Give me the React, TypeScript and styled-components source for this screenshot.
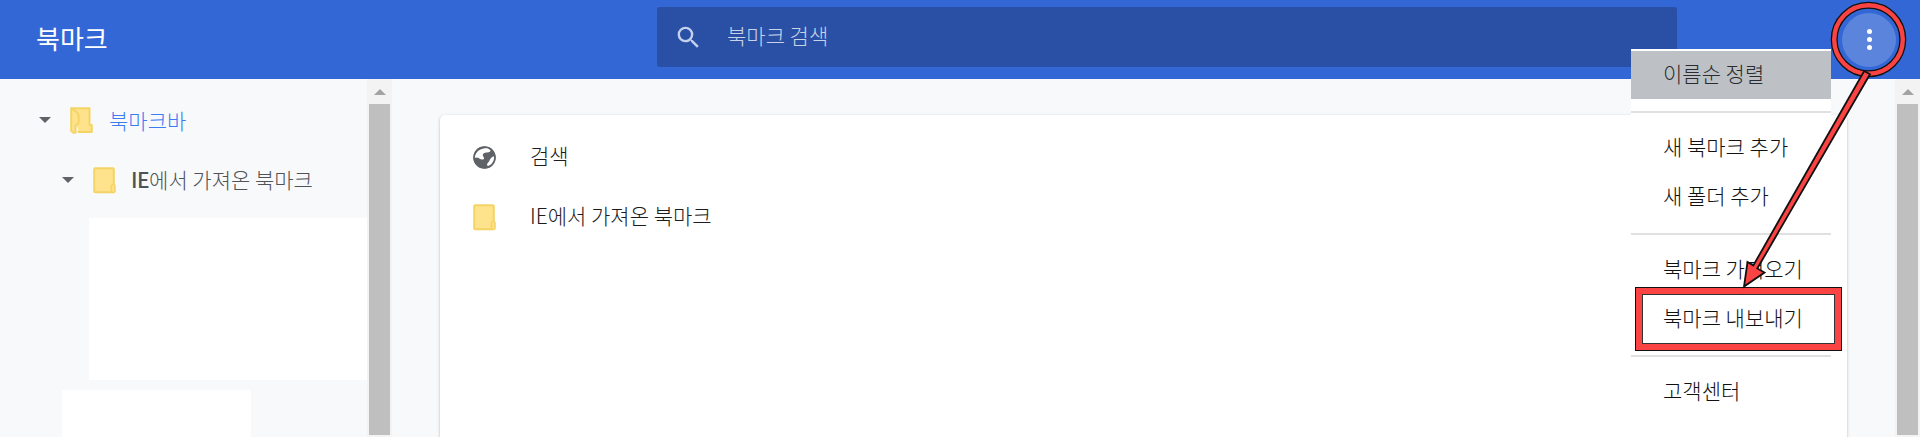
import styled, { createGlobalStyle } from 'styled-components';

const GlobalStyle = createGlobalStyle`
  html, body {
    margin: 0;
    padding: 0;
    background: #f8f9fa;
  }
  body {
    font-family: 'Noto Sans CJK KR', 'Noto Sans', sans-serif;
    font-weight: 300;
    overflow: hidden;
  }
`;

const Page = styled.div`
  position: relative;
  width: 1920px;
  height: 437px;
  overflow: hidden;
  display: flex;
  flex-direction: column;
`;

const Header = styled.header`
  flex: 0 0 79px;
  background: #3367d6;
  display: flex;
  align-items: center;
`;

const Title = styled.h1`
  flex: 0 0 657px;
  margin: 0;
  padding-left: 36px;
  padding-bottom: 5px;
  box-sizing: border-box;
  color: #fff;
  font-size: 26px;
  font-weight: 400;
`;

const SearchBox = styled.div`
  width: 1020px;
  height: 60px;
  margin-bottom: 5px;
  padding-left: 17px;
  box-sizing: border-box;
  border-radius: 3px;
  background: #2a50a6;
  display: flex;
  align-items: center;
  gap: 24px;
  color: rgba(255, 255, 255, 0.75);
  font-size: 21px;
  svg {
    flex: none;
  }
`;

const Label = styled.span<{ $lift?: number }>`
  padding-bottom: ${(p) => p.$lift ?? 5}px;
`;

const MoreButton = styled.button`
  margin-left: 165px;
  width: 54px;
  height: 54px;
  border: 0;
  border-radius: 50%;
  background: #5b84dd;
  display: flex;
  flex-direction: column;
  align-items: center;
  justify-content: center;
  gap: 3px;
`;

const Dot = styled.span`
  width: 5px;
  height: 5px;
  border-radius: 50%;
  background: #fff;
`;

const Body = styled.div`
  flex: 1;
  min-height: 0;
  display: flex;
`;

const Sidebar = styled.aside`
  flex: 0 0 367px;
  padding-top: 11px;
  box-sizing: border-box;
  overflow: hidden;
`;

const TreeRow = styled.div<{ $depth: number; $active?: boolean }>`
  height: 60px;
  display: flex;
  align-items: center;
  padding-left: ${(p) => 39 + p.$depth * 23}px;
  color: ${(p) => (p.$active ? '#3b7cf2' : '#4f5357')};
  font-size: 21px;
  b {
    font-weight: 500;
    margin-left: -1px;
    letter-spacing: -0.5px;
  }
`;

const Caret = styled.span`
  width: 0;
  height: 0;
  border-left: 6px solid transparent;
  border-right: 6px solid transparent;
  border-top: 6px solid #5f6368;
  margin-right: 19px;
`;

const FolderSlot = styled.span`
  width: 23px;
  height: 27px;
  margin-right: 16px;
  display: flex;
  svg {
    display: block;
  }
`;

const RedactedBlock = styled.div<{ $left: number; $width: number; $height: number; $top: number }>`
  background: #fff;
  margin-left: ${(p) => p.$left}px;
  margin-top: ${(p) => p.$top}px;
  width: ${(p) => p.$width}px;
  height: ${(p) => p.$height}px;
`;

const Scrollbar = styled.div`
  flex: 0 0 25px;
  background: #f3f3f3;
  display: flex;
  flex-direction: column;
  align-items: center;
`;

const ScrollArrow = styled.div`
  flex: 0 0 25px;
  display: flex;
  align-items: center;
  justify-content: center;
  &::before {
    content: '';
    border-left: 6px solid transparent;
    border-right: 6px solid transparent;
    border-bottom: 6px solid #a3a3a3;
  }
`;

const ScrollThumb = styled.div`
  width: 21px;
  height: 331px;
  background: #bfbfbf;
`;

const Main = styled.main`
  flex: 1;
  min-width: 0;
  padding: 36px 48px 0;
  box-sizing: border-box;
  overflow: hidden;
`;

const Card = styled.section`
  width: 1407px;
  height: 400px;
  padding-top: 12px;
  box-sizing: border-box;
  background: #fff;
  border-radius: 5px;
  box-shadow: 0 1px 3px rgba(60, 64, 67, 0.35);
`;

const CardRow = styled.div`
  height: 60px;
  padding-left: 33px;
  display: flex;
  align-items: center;
  color: #1c1c1c;
  font-size: 21px;
`;

const RowIcon = styled.span`
  width: 23px;
  height: 27px;
  margin-right: 34px;
  display: flex;
  align-items: center;
`;

const Menu = styled.div`
  position: absolute;
  left: 1631px;
  top: 49px;
  width: 200px;
  padding-top: 2px;
  background: #fff;
`;

const MenuItem = styled.div<{ $hover?: boolean }>`
  height: ${(p) => (p.$hover ? 48 : 49)}px;
  padding-left: 32px;
  padding-bottom: 4px;
  box-sizing: border-box;
  display: flex;
  align-items: center;
  background: ${(p) => (p.$hover ? '#bdc1c6' : 'transparent')};
  color: ${(p) => (p.$hover ? '#2a2c2e' : '#111')};
  font-size: 21px;
`;

const MenuSection = styled.div<{ $last?: boolean }>`
  padding: 10px 0 ${(p) => (p.$last ? 21 : 12)}px;
  border-top: 2px solid #e0e0e0;
`;

const MenuGap = styled.div`
  height: 12px;
`;

const ExportHighlight = styled.div`
  position: absolute;
  left: 1636px;
  top: 288px;
  width: 205px;
  height: 62px;
  box-sizing: border-box;
  border: 6px solid #fb4343;
  outline: 1px solid #111;
  box-shadow: inset 0 0 0 1px #333;
`;

const Annotation = styled.svg`
  position: absolute;
  left: 0;
  top: 0;
  pointer-events: none;
`;

const SearchIcon = () => (
  <svg width="29" height="29" viewBox="0 0 24 24" fill="#c3d0ee">
    <path d="M15.5 14h-.79l-.28-.27A6.471 6.471 0 0 0 16 9.5 6.5 6.5 0 1 0 9.5 16c1.61 0 3.09-.59 4.23-1.57l.27.28v.79l5 4.99L20.49 19l-4.99-5zm-6 0C7.01 14 5 11.99 5 9.5S7.01 5 9.5 5 14 7.01 14 9.5 11.99 14 9.5 14z" />
  </svg>
);

const GlobeIcon = () => (
  <svg width="23" height="23" viewBox="0 0 23 23">
    <circle cx="11.5" cy="11.5" r="11" fill="#5f6368" />
    <path
      d="M15 2c2 1 3.4 2.6 1.8 3.8-1.8 1.3-5.6.2-6.8 2.4-1 1.9 1.6 2.8 1 4.6-.5 1.4-3 .6-4.6-.4C5.2 11.400 3 11 1.600 12c.2-4.800 4-8.800 8.800-9.600C12 2 13.600 1.700 15 2z"
      fill="#fff"
    />
    <path
      d="M21.200 10.500c.3 2.200-.4 5.200-2 7-1.400 1.500-3 2.200-4.400 2.500-1.200-.6-.8-2.300.2-3.200 1.400-1.200 1.600-3.200 3-4.800.9-1 2.200-1.700 3.200-1.500z"
      fill="#fff"
    />
    <circle cx="11.500" cy="11.500" r="10.500" fill="none" stroke="#5f6368" strokeWidth="1.600" />
  </svg>
);

const ClosedFolder = () => (
  <svg width="23" height="27" viewBox="0 0 23 27">
    <rect x="1.200" y="1.200" width="19.600" height="24" rx="1" fill="#ffe38c" stroke="#f4d465" strokeWidth="2" />
    <rect x="18.500" y="17.500" width="3.500" height="8" rx="1.500" fill="#ffe38c" stroke="#f4d465" strokeWidth="1.600" />
  </svg>
);

const OpenFolder = () => (
  <svg width="23" height="27" viewBox="0 0 23 27">
    <path
      d="M1.200 1.200h18.300v16.800h2.300v7H8.500v-1.200"
      fill="#ffe38c"
      stroke="#f4d465"
      strokeWidth="2"
      strokeLinejoin="round"
    />
    <path
      d="M1.200 1.200l6.300 4.500c1.200 2.500 1.500 7 .8 11L5.500 18.500v7.300H3.500L1.200 24z"
      fill="#ffe38c"
      stroke="#f4d465"
      strokeWidth="2"
      strokeLinejoin="round"
    />
  </svg>
);

export default function App() {
  return (
    <Page>
      <GlobalStyle />
      <Header>
        <Title>북마크</Title>
        <SearchBox>
          <SearchIcon />
          <Label>북마크 검색</Label>
        </SearchBox>
        <MoreButton aria-label="more">
          <Dot />
          <Dot />
          <Dot />
        </MoreButton>
      </Header>
      <Body>
        <Sidebar>
          <TreeRow $depth={0} $active>
            <Caret />
            <FolderSlot>
              <OpenFolder />
            </FolderSlot>
            북마크바
          </TreeRow>
          <TreeRow $depth={1}>
            <Caret />
            <FolderSlot>
              <ClosedFolder />
            </FolderSlot>
            <Label $lift={2}>
              <b>IE</b>에서 가져온 북마크
            </Label>
          </TreeRow>
          <RedactedBlock $left={89} $top={8} $width={278} $height={162} />
          <RedactedBlock $left={62} $top={10} $width={189} $height={60} />
        </Sidebar>
        <Scrollbar>
          <ScrollArrow />
          <ScrollThumb />
        </Scrollbar>
        <Main>
          <Card>
            <CardRow>
              <RowIcon>
                <GlobeIcon />
              </RowIcon>
              <Label>검색</Label>
            </CardRow>
            <CardRow>
              <RowIcon>
                <ClosedFolder />
              </RowIcon>
              <Label>IE에서 가져온 북마크</Label>
            </CardRow>
          </Card>
        </Main>
        <Scrollbar>
          <ScrollArrow />
          <ScrollThumb />
        </Scrollbar>
      </Body>
      <Menu>
        <MenuItem $hover>이름순 정렬</MenuItem>
        <MenuGap />
        <MenuSection>
          <MenuItem>새 북마크 추가</MenuItem>
          <MenuItem>새 폴더 추가</MenuItem>
        </MenuSection>
        <MenuSection>
          <MenuItem>북마크 가져오기</MenuItem>
          <MenuItem>북마크 내보내기</MenuItem>
        </MenuSection>
        <MenuSection $last>
          <MenuItem>고객센터</MenuItem>
        </MenuSection>
      </Menu>
      <ExportHighlight />
      <Annotation width="1920" height="437" viewBox="0 0 1920 437">
        <circle cx="1868.500" cy="39.500" r="34.300" fill="none" stroke="#111" strokeWidth="7" />
        <circle cx="1868.500" cy="39.500" r="34.300" fill="none" stroke="#fb4343" strokeWidth="4.400" />
        <path
          d="M1864.200 71L1870 74.300L1757.300 268.500L1764.500 272.500L1744 286.500L1747.500 262L1753.300 265.500Z"
          fill="#fb4343"
          stroke="#111"
          strokeWidth="1.800"
          strokeLinejoin="miter"
        />
      </Annotation>
    </Page>
  );
}
